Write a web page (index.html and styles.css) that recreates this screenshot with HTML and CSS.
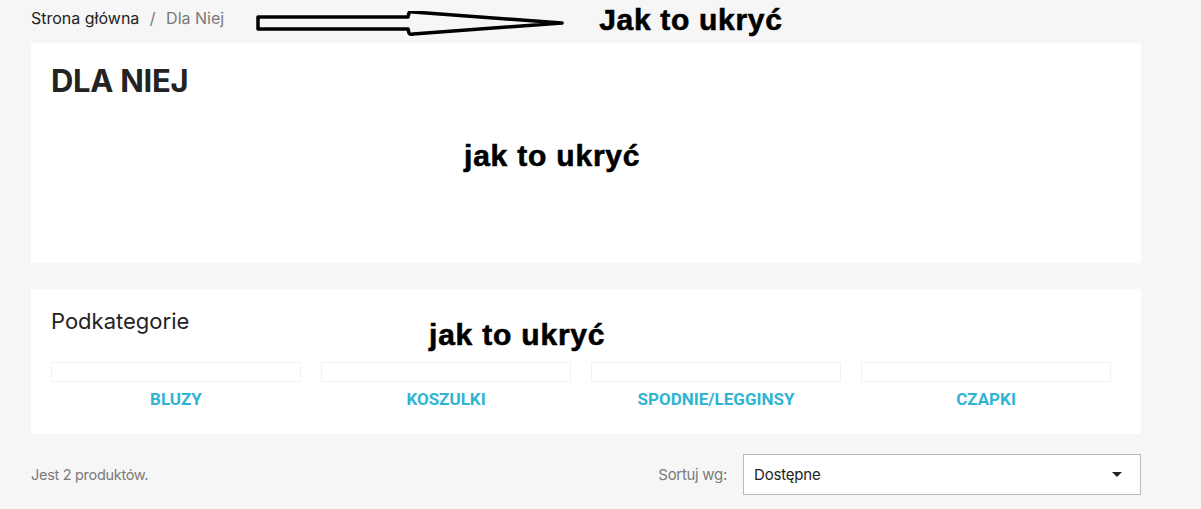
FILE: index.html
```html
<!DOCTYPE html>
<html lang="pl">
<head>
  <meta charset="UTF-8">
  <title>Dla Niej</title>
  <link rel="stylesheet" href="styles.css">
</head>
<body>

  <!-- Breadcrumb + note -->
  <div class="top-row">
    <nav class="breadcrumb">
      <a href="#">Strona główna</a>
      <span class="sep">/</span>
      <span class="current">Dla Niej</span>
    </nav>
    <svg class="note-arrow" width="310" height="26" viewBox="0 0 310 26">
      <path d="M2 6 L152 6 L153 2 Q154 0 157 1 L306 12 L157 23 Q154 24 153 22 L152 18 L2 18 Z"
            fill="#f6f6f6" stroke="#000" stroke-width="3.5" stroke-linejoin="round"/>
    </svg>
    <span class="note note-top">Jak to ukryć</span>
  </div>

  <main class="content">

    <!-- Category header -->
    <section class="card category-header">
      <h1>DLA NIEJ</h1>
      <span class="note note-header">jak to ukryć</span>
    </section>

    <!-- Subcategories -->
    <section class="card subcategories">
      <h2>Podkategorie</h2>
      <span class="note note-sub">jak to ukryć</span>
      <ul class="subcat-list">
        <li><div class="subcat-img"></div><a href="#">BLUZY</a></li>
        <li><div class="subcat-img"></div><a href="#">KOSZULKI</a></li>
        <li><div class="subcat-img"></div><a href="#">SPODNIE/LEGGINSY</a></li>
        <li><div class="subcat-img"></div><a href="#">CZAPKI</a></li>
      </ul>
    </section>

    <!-- Products toolbar -->
    <div class="toolbar">
      <p class="count">Jest 2 produktów.</p>
      <div class="sort">
        <span class="sort-label">Sortuj wg:</span>
        <div class="sort-select">
          <span>Dostępne</span>
          <span class="caret"></span>
        </div>
      </div>
    </div>

  </main>
</body>
</html>
```

FILE: styles.css
```css
body {
  margin: 0;
  background: #f6f6f6;
  font-family: Inter, "Noto Sans", sans-serif;
  color: #232323;
}

.top-row {
  display: flex;
  align-items: center;
  height: 43px;
  padding-left: 31px;
}
.breadcrumb {
  font-size: 16px;
  margin-top: -7px;
}
.breadcrumb a {
  color: #232323;
  text-decoration: none;
}
.breadcrumb .sep {
  color: #7a7a7a;
  margin: 0 6px;
}
.breadcrumb .current {
  color: #7a7a7a;
}
.note-arrow {
  margin-left: 32px;
  margin-top: 5px;
}
.note {
  font-family: "Liberation Sans", Arial, sans-serif;
  font-weight: bold;
  font-size: 30px;
  letter-spacing: 0.8px;
  color: #000;
  -webkit-text-stroke: 0.6px #000;
}
.note-top {
  letter-spacing: 0.7px;
  margin-left: 33px;
  margin-top: -3px;
}

.content {
  width: 1110px;
  margin-left: 31px;
}
.card {
  background: #fff;
  position: relative;
}

.category-header {
  height: 220px;
  padding: 20px;
  box-sizing: border-box;
}
h1 {
  margin: 0;
  font-size: 31px;
  font-weight: 700;
  letter-spacing: -0.3px;
  line-height: 36px;
}
.note-header {
  position: absolute;
  left: 433px;
  top: 96px;
}

.subcategories {
  margin-top: 26px;
  height: 145px;
  padding: 20px;
  box-sizing: border-box;
}
h2 {
  margin: 0;
  font-size: 22px;
  font-weight: 400;
  line-height: 24px;
}
.note-sub {
  position: absolute;
  left: 398px;
  top: 29px;
}
.subcat-list {
  list-style: none;
  margin: 29px 0 0;
  padding: 0;
  display: grid;
  grid-template-columns: repeat(4, 250px);
  column-gap: 20px;
}
.subcat-list li {
  text-align: center;
}
.subcat-img {
  height: 18px;
  border: 1px solid #f1f1f1;
}
.subcat-list a {
  display: block;
  margin-top: 7px;
  font-family: Roboto, "Liberation Sans", sans-serif;
  font-weight: bold;
  font-size: 17px;
  color: #2fb5d2;
  text-decoration: none;
}

.toolbar {
  display: flex;
  justify-content: space-between;
  align-items: center;
  margin-top: 20px;
}
.count {
  margin: 0;
  font-size: 14.5px;
  color: #7a7a7a;
  letter-spacing: -0.3px;
}
.sort {
  display: flex;
  align-items: center;
}
.sort-label {
  font-size: 15px;
  color: #7a7a7a;
  letter-spacing: -0.3px;
  margin-right: 16px;
}
.sort-select {
  width: 398px;
  height: 41px;
  box-sizing: border-box;
  border: 1px solid #bbb;
  background: #fff;
  display: flex;
  align-items: center;
  justify-content: space-between;
  padding: 0 18px 0 10px;
  font-size: 15px;
  letter-spacing: -0.2px;
}
.caret {
  width: 0;
  height: 0;
  border-left: 5px solid transparent;
  border-right: 5px solid transparent;
  border-top: 5px solid #232323;
}
```
